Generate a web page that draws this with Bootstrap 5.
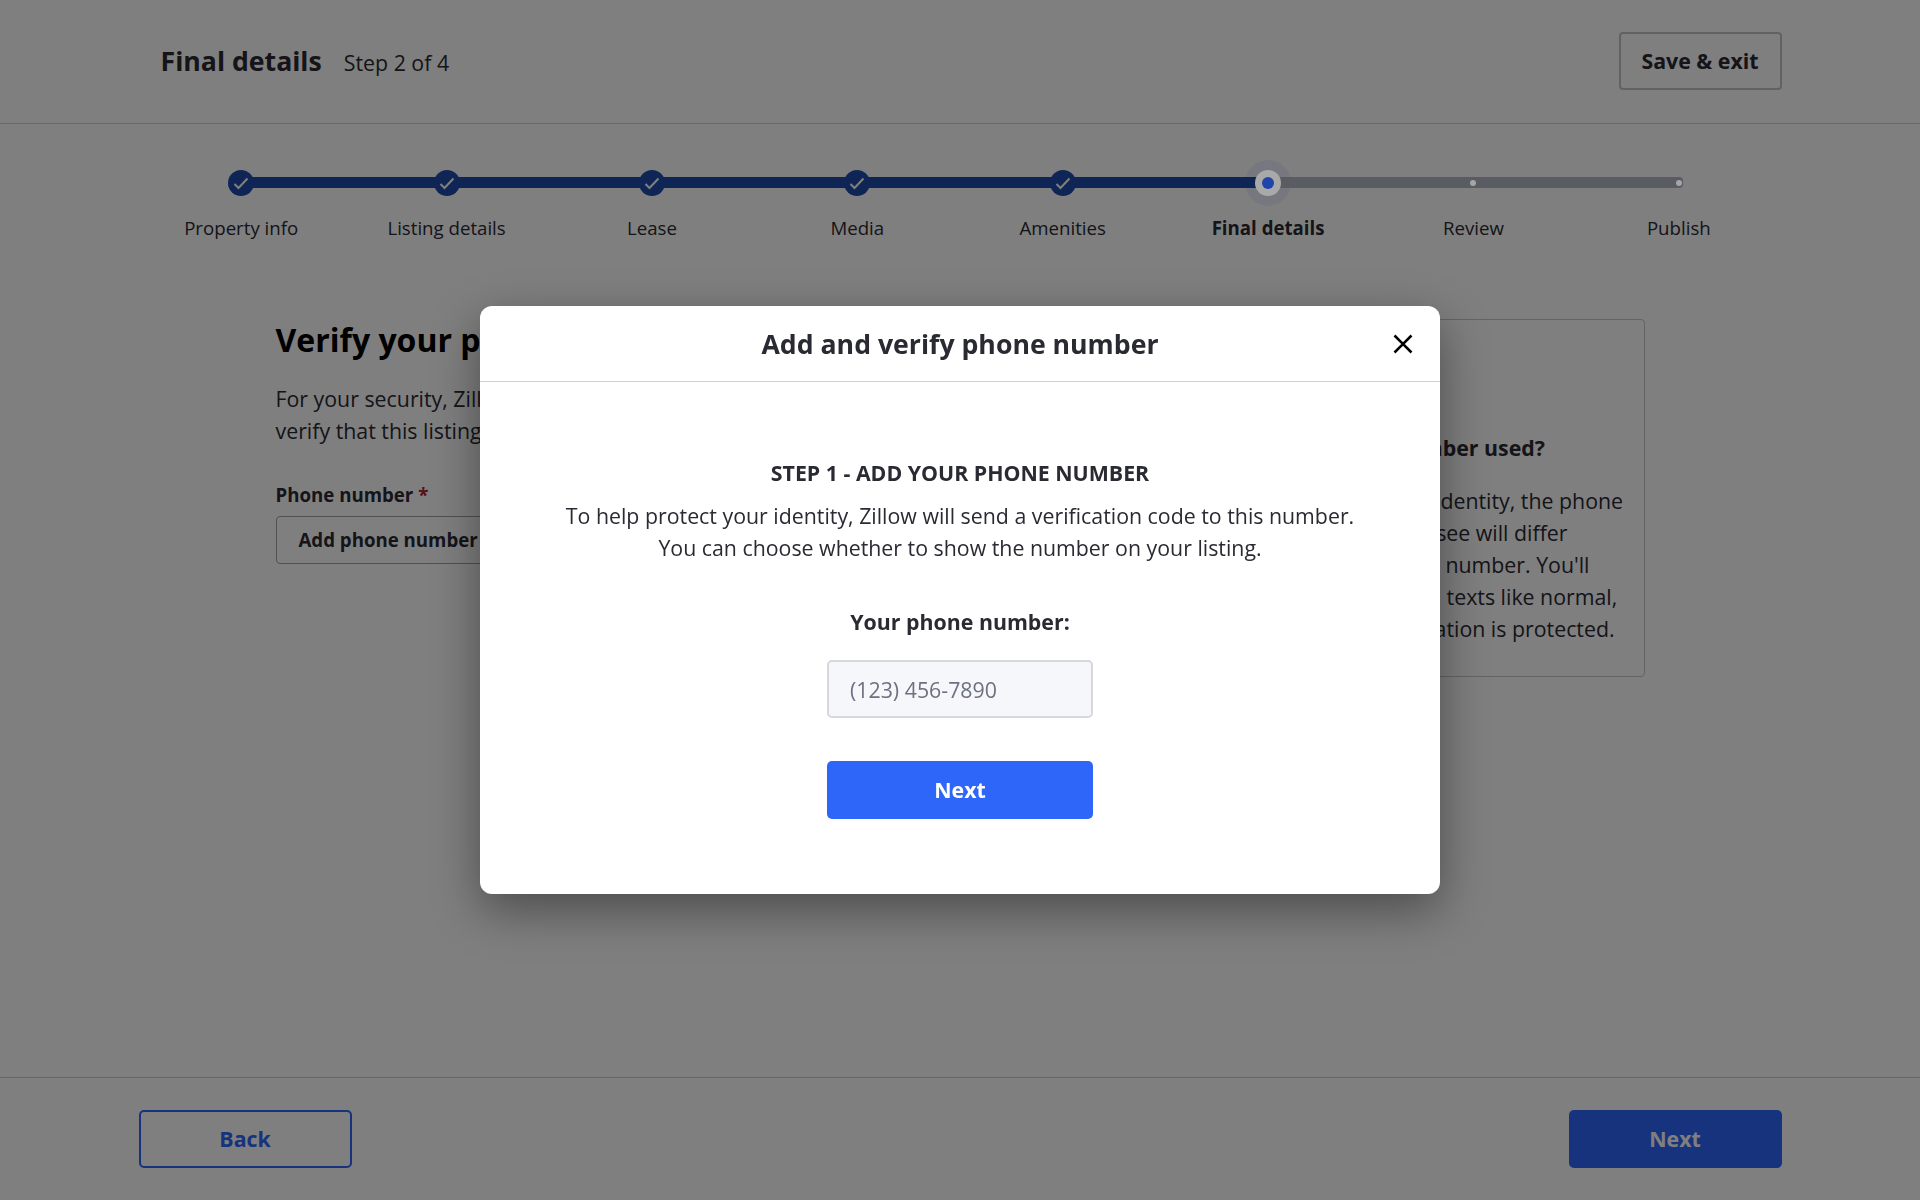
<!DOCTYPE html>
<html lang="en">
<head>
  <meta charset="UTF-8" />
  <meta name="viewport" content="width=device-width, initial-scale=1">
  <title>Final details</title>
  <link href="https://cdn.jsdelivr.net/npm/bootstrap@5.3.0/dist/css/bootstrap.min.css" rel="stylesheet" />
  <style>
    :root {
      --navy: #1e4aac;
      --brand: #2f66fa;
      --ink: #2a2a33;
    }
    body {
      font-family: "Open Sans", "Liberation Sans", sans-serif;
      color: var(--ink);
      background: #fff;
      font-size: 21.33px;
      overflow: hidden;
    }
    .page-wrap { width: 1643px; margin: 0 auto; }
    /* Header */
    .top-bar { height: 124px; border-bottom: 1px solid #cfcfcf; padding-bottom: 1px; }
    .top-title { font-size: 26.67px; font-weight: 700; margin: 0 22px 0 22px; }
    .outline-btn {
      font-size: 21.33px; font-weight: 700; color: var(--ink);
      border: 2px solid #c4c4c8; border-radius: 4px;
      height: 58px; width: 163px; padding: 0;
    }
    /* Stepper */
    .step-track { padding-top: 46px; }
    .step-item { flex: 1 1 0; text-align: center; position: relative; font-size: 18.67px; }
    .step-item::after {
      content: ""; position: absolute; z-index: 1; top: 7px; left: 50%; width: 100%; height: 11px;
      background: #b2b8c6;
    }
    .step-item.is-done::after { background: var(--navy); }
    .step-item:last-child::after { width: 4px; border-radius: 0 5px 5px 0; }
    .step-dot {
      width: 26px; height: 26px; border-radius: 50%; margin: 0 auto;
      position: relative; z-index: 2; display: flex; align-items: center; justify-content: center;
    }
    .is-done .step-dot { background: var(--navy); }
    .is-current::before {
      content: ""; position: absolute; z-index: 0; top: -10px; left: 50%; width: 46px; height: 46px;
      margin-left: -23px; border-radius: 50%; background: #eef1ff;
    }
    /* these two sit over the backdrop, so their colours are the final ones */
    .is-current .step-dot { background: #a9a9a9; z-index: 1051; }
    .is-current .step-dot span { width: 12px; height: 12px; border-radius: 50%; background: #1f45ab; }
    .is-current { font-weight: 700; }
    .is-todo .step-dot { width: 6px; height: 6px; margin: 10px auto; background: #a6a6a6; z-index: 1051; }
    .step-name { padding-top: 18px; line-height: 27px; }
    /* Main content */
    .main-area { width: 1369px; margin: 79px auto 0; }
    .main-left { width: 900px; }
    .main-title { font-size: 32px; font-weight: 700; color: #000; line-height: 40px; margin-bottom: 23px; }
    .main-copy { line-height: 32px; margin-bottom: 0; white-space: nowrap; }
    .field-name { font-size: 18.67px; font-weight: 700; margin-top: 35px; line-height: 26px; margin-bottom: 8px; }
    .req-star { color: #b3202c; }
    .add-phone {
      font-size: 18.67px; font-weight: 700; color: var(--ink);
      border: 1px solid #a0a0a4; border-radius: 4px;
      height: 48px; padding: 0 22px;
    }
    .side-box {
      width: 440px; height: 358px; border: 1px solid #c8c8cc; border-radius: 4px;
      padding: 112px 22px 0; margin-top: -1px;
    }
    .side-title { font-weight: 700; line-height: 32px; margin-bottom: 21px; white-space: nowrap; }
    .side-copy { line-height: 32px; margin: 0; white-space: nowrap; }
    /* Footer */
    .bottom-bar { height: 123px; border-top: 1px solid #cfcfcf; margin-top: auto; }
    .foot-btn { width: 213px; height: 58px; font-size: 21.33px; font-weight: 700; border-radius: 5px; padding: 0; }
    .foot-back { border: 2px solid var(--brand); color: var(--brand); }
    .foot-next { background: var(--brand); color: #fff; border: 0; }
    /* Modal */
    .phone-dialog { max-width: 960px; }
    .phone-modal { border: 0; border-radius: 12px; box-shadow: 0 16px 48px rgba(0,0,0,.4); }
    .phone-head {
      display: grid; grid-template-columns: 1fr auto 1fr; align-items: center;
      height: 76px; border-bottom: 1px solid #d1d1d5; padding: 0 27px;
    }
    .phone-title { font-size: 26.67px; font-weight: 700; margin: 0; color: var(--ink); }
    .close-x { justify-self: end; background: none; border: 0; padding: 0; width: 20px; height: 20px; display: flex; }
    .phone-body { padding: 77px 0 75px; text-align: center; }
    .phone-step { font-weight: 700; line-height: 28px; margin-bottom: 13px; }
    .phone-copy { line-height: 32px; margin-bottom: 43px; }
    .phone-label { font-weight: 700; line-height: 30px; margin-bottom: 23px; display: block; }
    .phone-input {
      width: 266px; height: 58px; margin: 0 auto 43px; font-size: 21.33px;
      background: #f6f7fb; border: 2px solid #d8d8dc; border-radius: 5px; padding: 0 21px; color: var(--ink);
    }
    .phone-input::placeholder { color: #6c7280; opacity: 1; }
    .phone-next { display: block; margin: 0 auto; width: 266px; height: 58px; background: var(--brand); color: #fff; border: 0; border-radius: 5px; font-size: 21.33px; font-weight: 700; }
  </style>
</head>
<body>
  <div class="d-flex flex-column vh-100">
    <!-- Header -->
    <header class="top-bar">
      <div class="page-wrap h-100 d-flex align-items-center justify-content-between">
        <div class="d-flex align-items-baseline">
          <div class="top-title">Final details</div>
          <div>Step 2 of 4</div>
        </div>
        <button class="btn outline-btn" type="button">Save &amp; exit</button>
      </div>
    </header>

    <!-- Stepper -->
    <div class="page-wrap step-track d-flex" id="stepper"></div>

    <!-- Page content, mostly behind the modal -->
    <main class="main-area d-flex justify-content-between">
      <div class="main-left">
        <h1 class="main-title">Verify your phone number</h1>
        <p class="main-copy">For your security, Zillow requires you to<br>verify that this listing is yours.</p>
        <div class="field-name">Phone number <span class="req-star">*</span></div>
        <button class="btn add-phone" type="button">Add phone number</button>
      </div>
      <aside class="side-box">
        <div class="side-title">Why is a phone number used?</div>
        <p class="side-copy">To help protect your identity, the phone<br>number that renters see will differ<br>from your real phone number. You'll<br>still get your calls and texts like normal,<br>and also your information is protected.</p>
      </aside>
    </main>

    <!-- Footer -->
    <footer class="bottom-bar">
      <div class="page-wrap h-100 d-flex align-items-center justify-content-between">
        <button class="btn foot-btn foot-back" type="button">Back</button>
        <button class="btn foot-btn foot-next" type="button">Next</button>
      </div>
    </footer>
  </div>

  <div class="modal-backdrop show"></div>
  <div class="modal d-block" tabindex="-1">
    <div class="modal-dialog modal-dialog-centered phone-dialog">
      <div class="modal-content phone-modal">
        <div class="phone-head">
          <span></span>
          <h2 class="phone-title">Add and verify phone number</h2>
          <button class="close-x" type="button" aria-label="Close">
            <svg width="20" height="20" viewBox="0 0 20 20"><path d="M1.5 1.5 18.5 18.5M18.5 1.5 1.5 18.5" stroke="#000" stroke-width="2.6" fill="none"/></svg>
          </button>
        </div>
        <div class="phone-body">
          <div class="phone-step">STEP 1 - ADD YOUR PHONE NUMBER</div>
          <p class="phone-copy">To help protect your identity, Zillow will send a verification code to this number.<br>You can choose whether to show the number on your listing.</p>
          <label class="phone-label" for="phoneInput">Your phone number:</label>
          <input class="form-control phone-input" id="phoneInput" type="text" placeholder="(123) 456-7890">
          <button class="btn phone-next" type="button">Next</button>
        </div>
      </div>
    </div>
  </div>

  <script src="https://cdn.jsdelivr.net/npm/bootstrap@5.3.0/dist/js/bootstrap.bundle.min.js"></script>
  <script>
    // Build the stepper from a list so all eight steps stay the same.
    const steps = ['Property info', 'Listing details', 'Lease', 'Media', 'Amenities', 'Final details', 'Review', 'Publish'];
    const currentStep = 5;
    const check = '<svg width="16" height="13" viewBox="0 0 16 13"><path d="M1.5 7 5.5 11 14.5 1.5" stroke="#fff" stroke-width="2" fill="none"/></svg>';
    document.getElementById('stepper').innerHTML = steps.map((name, i) => {
      const state = i < currentStep ? 'is-done' : i === currentStep ? 'is-current' : 'is-todo';
      const inner = i < currentStep ? check : i === currentStep ? '<span></span>' : '';
      return `<div class="step-item ${state}"><div class="step-dot">${inner}</div><div class="step-name">${name}</div></div>`;
    }).join('');
  </script>
</body>
</html>
